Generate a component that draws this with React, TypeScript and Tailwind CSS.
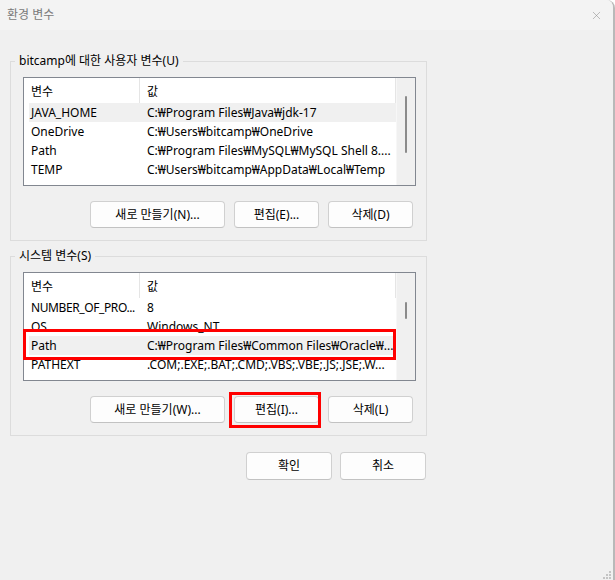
import React from 'react';
import { X } from 'lucide-react';

type EnvVar = { name: string; value: string; tight?: boolean };

const userVars: EnvVar[] = [
  { name: 'JAVA_HOME', value: 'C:₩Program Files₩Java₩jdk-17' },
  { name: 'OneDrive', value: 'C:₩Users₩bitcamp₩OneDrive' },
  { name: 'Path', value: 'C:₩Program Files₩MySQL₩MySQL Shell 8....' },
  { name: 'TEMP', value: 'C:₩Users₩bitcamp₩AppData₩Local₩Temp' },
];

const systemVars: EnvVar[] = [
  { name: 'NUMBER_OF_PRO...', value: '8', tight: true },
  { name: 'OS', value: 'Windows_NT' },
  { name: 'Path', value: 'C:₩Program Files₩Common Files₩Oracle₩...' },
  { name: 'PATHEXT', value: '.COM;.EXE;.BAT;.CMD;.VBS;.VBE;.JS;.JSE;.W...' },
];

const WinButton: React.FC<{ label: string; className?: string }> = ({ label, className }) => (
  <button
    className={
      'h-[27px] rounded-[4px] border border-[#d0d0d0] border-b-[#c2c2c2] bg-[#fdfdfd] text-[12px] text-black ' +
      (className ?? 'w-[85px]')
    }
  >
    {label}
  </button>
);

interface VarListProps {
  rows: EnvVar[];
  highlight: number;
  thumbTop: string;
  thumbHeight: string;
  marked?: boolean;
}

const VarList: React.FC<VarListProps> = ({ rows, highlight, thumbTop, thumbHeight, marked }) => (
  <div className="relative flex h-[109px] w-[393px] border border-[#828790] bg-white">
    <div className="flex w-[372px] flex-col overflow-hidden">
      {/* column header */}
      <div className="flex h-[25px] shrink-0 items-center pl-[5px]">
        <div className="flex h-full w-[111px] items-center border-r border-[#e5e5e5] pl-[2px] pt-[2px]">변수</div>
        <div className="flex h-full flex-1 items-center border-r border-[#e5e5e5] pl-[7px] pt-[2px]">값</div>
      </div>
      {rows.map((r, i) => (
        <div
          key={i}
          className={'ml-[5px] flex h-[19px] shrink-0 items-center ' + (i === highlight ? 'bg-[#f0f0f0]' : '')}
        >
          <div className={'w-[111px] whitespace-nowrap pl-[2px] ' + (r.tight ? 'tracking-[-0.4px]' : 'truncate')}>
            {r.name}
          </div>
          <div className="flex-1 truncate pl-[7px] pr-[2px]">{r.value}</div>
        </div>
      ))}
    </div>
    {/* scrollbar */}
    <div className="flex w-[19px] flex-col border-l border-[#f7f7f7] bg-[#f0f0f0]">
      <div className={'ml-[8px] w-[2px] rounded-full bg-[#8b8b8b] ' + thumbTop + ' ' + thumbHeight} />
    </div>
    {marked && (
      <div className="pointer-events-none absolute left-[-1px] top-[56px] h-[31px] w-[373px] border-[3px] border-[#ff0000]" />
    )}
  </div>
);

const GroupBox: React.FC<{ title: string; children: React.ReactNode }> = ({ title, children }) => (
  <fieldset className="w-[417px] border border-[#dcdcdc] p-0">
    <legend className="ml-[4px] px-[4px] text-[12px] leading-[18px]">{title}</legend>
    <div className="pl-[12px] pt-[7px] pb-[12px]">{children}</div>
  </fieldset>
);

export default function App() {
  return (
    <div className="relative h-[580px] w-[615px] overflow-hidden rounded-tr-[8px] border-r-2 border-[#b9b9b9] bg-[#f0f0f0] font-['Noto_Sans','Noto_Sans_CJK_KR',sans-serif] text-[12px] text-black">
      {/* title bar */}
      <div className="flex h-[30px] items-center justify-between bg-[#f3f3f3] pl-[7px] pr-[10px]">
        <span className="text-[12px] text-[#7a7a7a]">환경 변수</span>
        <X size={13} strokeWidth={1} className="text-[#8a8a8a]" />
      </div>

      <div className="pl-[10px] pt-[22px]">
        <GroupBox title="bitcamp에 대한 사용자 변수(U)">
          <VarList rows={userVars} highlight={0} thumbTop="mt-[18px]" thumbHeight="h-[57px]" />
          <div className="ml-[67px] mt-[15px] flex gap-[9px]">
            <WinButton label="새로 만들기(N)..." className="w-[135px]" />
            <WinButton label="편집(E)..." />
            <WinButton label="삭제(D)" />
          </div>
        </GroupBox>

        <div className="mt-[6px]">
          <GroupBox title="시스템 변수(S)">
            <VarList rows={systemVars} highlight={2} thumbTop="mt-[29px]" thumbHeight="h-[17px]" marked />
            <div className="ml-[67px] mt-[15px] flex gap-[9px]">
              <WinButton label="새로 만들기(W)..." className="w-[135px]" />
              <span className="relative flex">
                <WinButton label="편집(I)..." />
                <span className="pointer-events-none absolute left-[-5px] top-[-4px] h-[36px] w-[92px] border-[3px] border-[#ff0000]" />
              </span>
              <WinButton label="삭제(L)" />
            </div>
          </GroupBox>
        </div>

        <div className="mt-[16px] flex w-[416px] justify-end gap-[8px]">
          <WinButton label="확인" className="w-[86px] h-[28px]" />
          <WinButton label="취소" className="w-[86px] h-[28px]" />
        </div>
      </div>

      {/* resize grip */}
      <svg className="absolute bottom-0 right-0" width="12" height="9" viewBox="0 0 12 9">
        <rect x="8" y="0" width="2" height="2" fill="#c4c4c4" />
        <rect x="5" y="3" width="2" height="2" fill="#c4c4c4" />
        <rect x="8" y="3" width="2" height="2" fill="#c4c4c4" />
        <rect x="2" y="6" width="2" height="2" fill="#c4c4c4" />
        <rect x="5" y="6" width="2" height="2" fill="#c4c4c4" />
        <rect x="8" y="6" width="2" height="2" fill="#c4c4c4" />
      </svg>
    </div>
  );
}
